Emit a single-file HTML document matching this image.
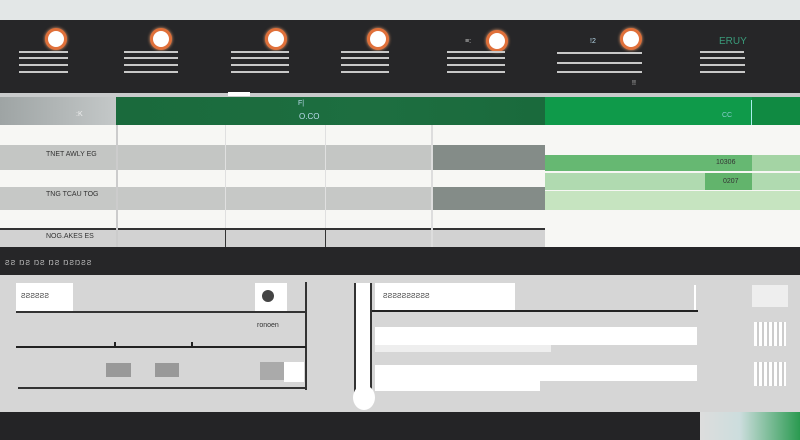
<!DOCTYPE html>
<html><head><style>
*{margin:0;padding:0;box-sizing:border-box}
body{width:800px;height:440px;overflow:hidden;background:#e3e7e7;font-family:"Liberation Sans",sans-serif;position:relative}
div{position:absolute}
.t{font-size:7px;color:#333}
.ln{background:#c8c8c8;height:2px}
.ic{width:22px;height:22px;border-radius:50%;background:#fff;border:3px solid #e0703a;box-shadow:0 0 3px #f0a070}
</style></head><body>
<div style="left:0;top:20px;width:800px;height:73px;background:#262628"></div>
<div class="ic" style="left:45px;top:28px"></div>
<div class="ln" style="left:19px;top:51px;width:49px"></div><div class="ln" style="left:19px;top:57px;width:49px"></div><div class="ln" style="left:19px;top:64px;width:49px"></div><div class="ln" style="left:19px;top:71px;width:49px"></div>
<div class="ic" style="left:150px;top:28px"></div>
<div class="ln" style="left:124px;top:51px;width:54px"></div><div class="ln" style="left:124px;top:57px;width:54px"></div><div class="ln" style="left:124px;top:64px;width:54px"></div><div class="ln" style="left:124px;top:71px;width:54px"></div>
<div class="ic" style="left:265px;top:28px"></div>
<div class="ln" style="left:231px;top:51px;width:58px"></div><div class="ln" style="left:231px;top:57px;width:58px"></div><div class="ln" style="left:231px;top:64px;width:58px"></div><div class="ln" style="left:231px;top:71px;width:58px"></div>
<div class="ic" style="left:367px;top:28px"></div>
<div class="ln" style="left:341px;top:51px;width:48px"></div><div class="ln" style="left:341px;top:57px;width:48px"></div><div class="ln" style="left:341px;top:64px;width:48px"></div><div class="ln" style="left:341px;top:71px;width:48px"></div>
<div class="ic" style="left:486px;top:30px"></div>
<div class="t" style="left:465px;top:38px;color:#ccc">≡:</div>
<div class="ln" style="left:447px;top:51px;width:58px"></div><div class="ln" style="left:447px;top:57px;width:58px"></div><div class="ln" style="left:447px;top:64px;width:58px"></div><div class="ln" style="left:447px;top:71px;width:58px"></div>
<div class="ic" style="left:620px;top:28px"></div>
<div class="t" style="left:590px;top:38px;color:#bde">!2</div>
<div class="ln" style="left:557px;top:52px;width:85px"></div><div class="ln" style="left:557px;top:62px;width:85px"></div><div class="ln" style="left:557px;top:71px;width:85px"></div>
<div class="t" style="left:632px;top:80px;color:#ccc">!!</div>
<div class="t" style="left:719px;top:36px;color:#3a9a7a;font-size:10px">ERUY</div>
<div class="ln" style="left:700px;top:51px;width:44px"></div><div class="ln" style="left:700px;top:57px;width:45px"></div><div class="ln" style="left:700px;top:64px;width:45px"></div><div class="ln" style="left:700px;top:71px;width:45px"></div>
<div style="left:0;top:93px;width:800px;height:4px;background:#c8cacb"></div>
<div style="left:228px;top:92px;width:22px;height:4px;background:#fff"></div>
<div style="left:0;top:97px;width:116px;height:28px;background:linear-gradient(90deg,#9ea4a4,#c4c8c8)"></div>
<div class="t" style="left:76px;top:111px;color:#eee">:K</div>
<div style="left:116px;top:97px;width:430px;height:28px;background:linear-gradient(90deg,#1a6a3c,#1d6e40 60%,#1a6a3c)"></div>
<div class="t" style="left:298px;top:100px;color:#bde">F|</div>
<div class="t" style="left:299px;top:112px;color:#bde;font-size:8px">O.CO</div>
<div style="left:545px;top:97px;width:255px;height:28px;background:#0f9a4a"></div>
<div style="left:751px;top:100px;width:1px;height:25px;background:#aee"></div>
<div style="left:752px;top:97px;width:48px;height:28px;background:#108a42"></div>
<div class="t" style="left:722px;top:112px;color:#8cc">CC</div>
<div style="left:0;top:125px;width:800px;height:122px;background:#f7f7f4"></div>
<div style="left:0;top:145px;width:545px;height:25px;background:#c4c6c4"></div>
<div style="left:0;top:187px;width:545px;height:23px;background:#c6c8c6"></div>
<div style="left:0;top:228px;width:545px;height:19px;background:#d2d2d2"></div>
<div style="left:0;top:228px;width:545px;height:2px;background:#333"></div>
<div style="left:432px;top:145px;width:113px;height:25px;background:#848c88"></div>
<div style="left:432px;top:187px;width:113px;height:23px;background:#848c88"></div>
<div style="left:116px;top:125px;width:2px;height:122px;background:#ccc"></div>
<div style="left:225px;top:125px;width:1px;height:122px;background:#e0e0e0"></div>
<div style="left:225px;top:228px;width:1px;height:19px;background:#333"></div>
<div style="left:325px;top:125px;width:1px;height:122px;background:#e0e0e0"></div>
<div style="left:325px;top:228px;width:1px;height:19px;background:#333"></div>
<div style="left:431px;top:125px;width:2px;height:122px;background:#ddd"></div>
<div class="t" style="left:46px;top:151px">TNET AWLY EG</div>
<div class="t" style="left:46px;top:191px">TNG TCAU TOG</div>
<div class="t" style="left:46px;top:233px">NOG.AKES ES</div>
<div style="left:545px;top:155px;width:207px;height:16px;background:#66b872"></div>
<div style="left:752px;top:155px;width:48px;height:16px;background:#a4d4a4"></div>
<div class="t" style="left:716px;top:159px">10306</div>
<div style="left:545px;top:173px;width:255px;height:17px;background:#b0dab0"></div>
<div style="left:705px;top:173px;width:47px;height:17px;background:#62b46c"></div>
<div class="t" style="left:723px;top:178px">0207</div>
<div style="left:545px;top:191px;width:255px;height:19px;background:#c6e4c0"></div>
<div style="left:0;top:247px;width:800px;height:28px;background:#262628"></div>
<div class="t" style="left:5px;top:260px;color:#ccc;letter-spacing:1px">ƧƧ ŊƧ ŊƧ ŊƧ ŊƧŊƧƧ</div>
<div style="left:0;top:275px;width:800px;height:137px;background:#d6d6d6"></div>
<div style="left:16px;top:283px;width:57px;height:28px;background:#fff"></div>
<div class="t" style="left:21px;top:293px">ƧƧƧƧƧƧ</div>
<div style="left:255px;top:283px;width:32px;height:28px;background:#fff"></div>
<div style="left:262px;top:290px;width:12px;height:12px;border-radius:50%;background:#444"></div>
<div style="left:16px;top:311px;width:290px;height:2px;background:#333"></div>
<div style="left:305px;top:282px;width:2px;height:108px;background:#333"></div>
<div class="t" style="left:257px;top:322px">ronoen</div>
<div style="left:16px;top:346px;width:290px;height:2px;background:#222"></div>
<div style="left:114px;top:342px;width:2px;height:6px;background:#222"></div>
<div style="left:191px;top:342px;width:2px;height:6px;background:#222"></div>
<div style="left:106px;top:363px;width:25px;height:14px;background:#999"></div>
<div style="left:155px;top:363px;width:24px;height:14px;background:#999"></div>
<div style="left:260px;top:362px;width:24px;height:18px;background:#aaa"></div>
<div style="left:284px;top:362px;width:20px;height:20px;background:#fff"></div>
<div style="left:18px;top:387px;width:288px;height:2px;background:#333"></div>
<div style="left:354px;top:283px;width:18px;height:118px;background:#fff;border-left:2px solid #333;border-right:2px solid #333"></div>
<div style="left:353px;top:385px;width:22px;height:25px;border-radius:50%;background:#fff"></div>
<div style="left:375px;top:283px;width:140px;height:28px;background:#fff"></div>
<div class="t" style="left:383px;top:293px">ƧƧƧƧƧƧƧƧƧƧ</div>
<div style="left:372px;top:310px;width:326px;height:2px;background:#222"></div>
<div style="left:694px;top:285px;width:2px;height:25px;background:#fff"></div>
<div style="left:375px;top:327px;width:322px;height:18px;background:#fff"></div>
<div style="left:375px;top:345px;width:176px;height:7px;background:#eee"></div>
<div style="left:375px;top:365px;width:322px;height:16px;background:#fff"></div>
<div style="left:375px;top:380px;width:165px;height:11px;background:#fff"></div>
<div style="left:752px;top:285px;width:36px;height:22px;background:#eee"></div>
<div style="left:754px;top:322px;width:32px;height:24px;background:repeating-linear-gradient(90deg,#fff 0 3px,#ccc 3px 5px)"></div>
<div style="left:754px;top:362px;width:32px;height:24px;background:repeating-linear-gradient(90deg,#fff 0 3px,#ccc 3px 5px)"></div>
<div style="left:0;top:412px;width:800px;height:28px;background:#242426"></div>
<div style="left:700px;top:412px;width:100px;height:28px;background:linear-gradient(90deg,#ddd,#cdd 40%,#2a9a50)"></div>
</body></html>
